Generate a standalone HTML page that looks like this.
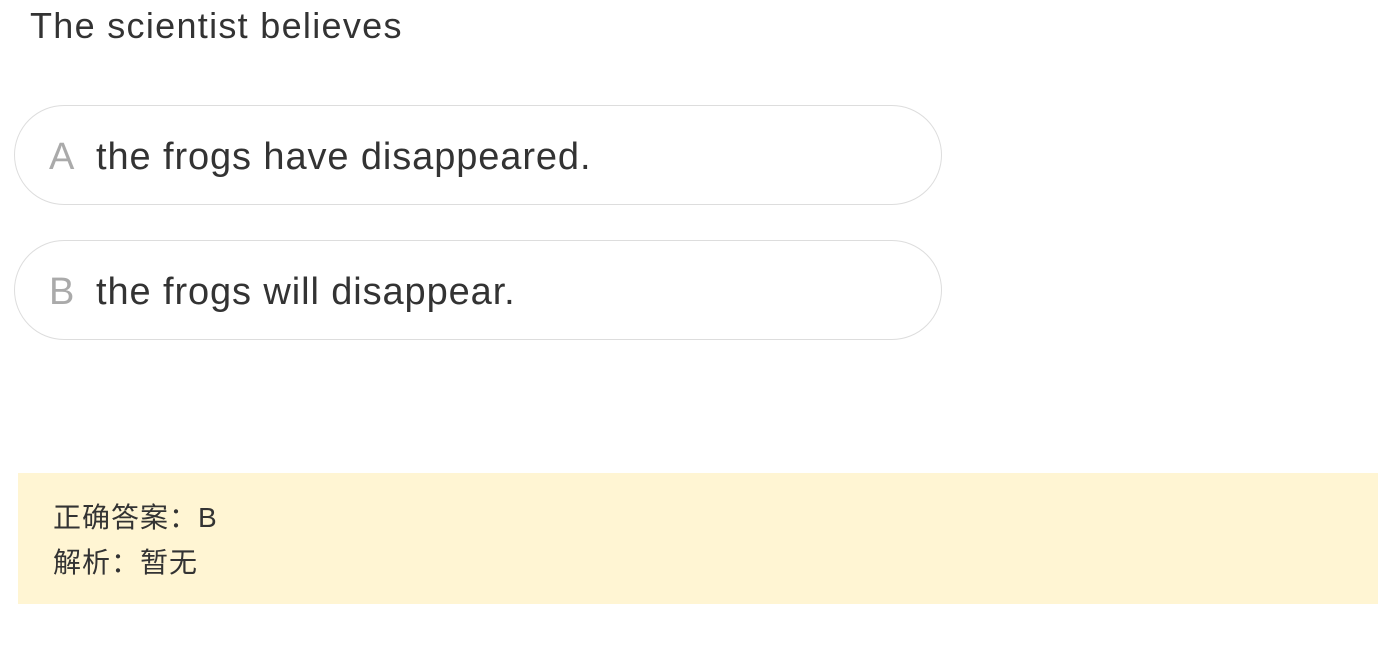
<!DOCTYPE html>
<html><head><meta charset="utf-8"><style>
body{margin:0;background:#fff;width:1396px;height:651px;overflow:hidden;font-family:"Liberation Sans","Noto Sans CJK SC",sans-serif;color:#333;}
.t{position:absolute;left:30px;top:2px;font-size:36px;line-height:48px;color:#333;letter-spacing:1.3px;}
.o{position:absolute;left:14px;width:926px;height:98px;border:1px solid #ddd;border-radius:50px;box-sizing:content-box;}
.o span.l{position:absolute;left:34px;top:27px;font-size:38px;line-height:48px;color:#aaa;}
.o span.x{position:absolute;left:81px;top:27px;font-size:38px;line-height:48px;color:#333;letter-spacing:0.9px;}
.y{position:absolute;left:18px;top:473px;width:1360px;height:131px;background:#fff5d3;}
.y div{position:absolute;left:35px;font-size:28px;line-height:46px;color:#333;letter-spacing:1px;}
</style></head><body>
<div class="t">The scientist believes</div>
<div class="o" style="top:105px"><span class="l">A</span><span class="x">the frogs have disappeared.</span></div>
<div class="o" style="top:240px"><span class="l">B</span><span class="x">the frogs will disappear.</span></div>
<div class="y"><div style="top:22px">正确答案：B</div><div style="top:67px">解析：暂无</div></div>
</body></html>
